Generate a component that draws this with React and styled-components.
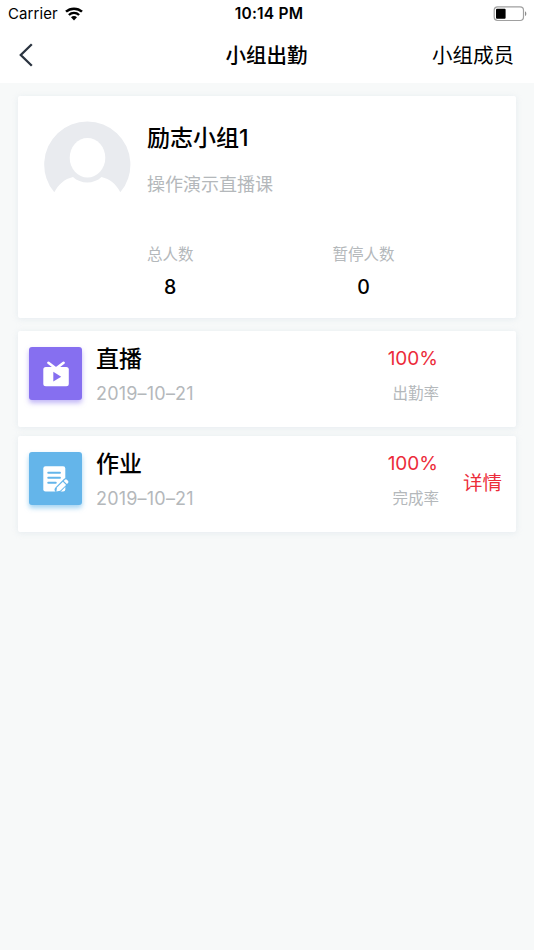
import React from "react";
import styled, { createGlobalStyle } from "styled-components";

const groups = [
  {
    type: "live",
    title: "直播",
    date: "2019–10–21",
    rate: "100%",
    label: "出勤率",
  },
  {
    type: "homework",
    title: "作业",
    date: "2019–10–21",
    rate: "100%",
    label: "完成率",
    action: "详情",
  },
];

const WifiIcon = () => (
  <svg width="18" height="14" viewBox="0 0 18 14" fill="none">
    <path d="M1 4.7C5.5.6 12.5.6 17 4.7" stroke="#000" strokeWidth="2.5" />
    <path d="M3.9 8C6.8 5.2 11.2 5.2 14.1 8" stroke="#000" strokeWidth="2.4" />
    <path d="M6 10.3C7.6 8.7 10.4 8.7 12 10.3L9 13.5Z" fill="#000" />
  </svg>
);

const BatteryIcon = () => (
  <svg width="34" height="16" viewBox="0 0 34 16">
    <rect x="1.2" y="0.9" width="29.3" height="13.6" rx="3.4" fill="none" stroke="#a0a0a0" strokeWidth="1.2" />
    <rect x="3" y="2.7" width="9.6" height="10" rx="1" fill="#000" />
    <path d="M32 5.3C33.8 6 33.8 9.4 32 10.1Z" fill="#8e8e8e" />
  </svg>
);

const BackIcon = () => (
  <svg width="14" height="24" viewBox="0 0 14 24" fill="none">
    <path d="M12.8 1.2L1.8 12L12.8 22.8" stroke="#2b3440" strokeWidth="2.3" />
  </svg>
);

const AvatarIcon = () => (
  <svg width="88" height="72" viewBox="0 0 88 72">
    <path
      d="M11.3 71.3A43.1 43.1 0 1 1 77.3 71.3C73 63 67 58 58.5 56C51 63.3 37.5 63.3 30 56C21.500 58 15.500 63.300 11.300 71.300Z"
      fill="#e9ebef"
    />
    <ellipse cx="44.5" cy="36.7" rx="17.8" ry="19.7" fill="#fff" />
  </svg>
);

const LiveIcon = () => (
  <svg width="53" height="53" viewBox="0 0 53 53">
    <path d="M19.4 15.8L27 21.5L34.6 15.8" stroke="#fff" strokeWidth="2.6" strokeLinecap="round" fill="none" />
    <rect x="14.3" y="19.9" width="25.5" height="19.3" rx="2.5" fill="#fff" />
    <path d="M24.3 24.8V34.6L32.2 29.7Z" fill="#866ff0" />
  </svg>
);

const HomeworkIcon = () => (
  <svg width="53" height="53" viewBox="0 0 53 53">
    <rect x="14.3" y="14.2" width="22" height="25.3" rx="2.2" fill="#fff" />
    <path d="M19.2 20.8H31M19.2 25.8H31M19.2 30.8H26.8" stroke="#64b5ea" strokeWidth="1.9" strokeLinecap="round" />
    <path d="M29 37.6L37.2 29.4" stroke="#64b5ea" strokeWidth="6.6" strokeLinecap="round" />
    <path d="M27.4 39.4L28 35.6L33.9 29.7L37.1 32.9L31.2 38.8Z" fill="#fff" />
    <path d="M34.7 28.9L35.9 27.7Q37 26.9 38.1 27.9L38.9 28.700Q39.9 29.8 39.1 30.900L37.9 32.1Z" fill="#fff" />
  </svg>
);

const StatItem = ({ label, value }) => (
  <Stat>
    <StatLabel>{label}</StatLabel>
    <StatValue>{value}</StatValue>
  </Stat>
);

const GroupRow = ({ item }) => (
  <RowCard>
    <IconBox $live={item.type === "live"}>
      {item.type === "live" ? <LiveIcon /> : <HomeworkIcon />}
    </IconBox>
    <RowInfo>
      <RowTitle>{item.title}</RowTitle>
      <RowDate>{item.date}</RowDate>
    </RowInfo>
    <RowRate>
      <Rate>{item.rate}</Rate>
      <RateLabel>{item.label}</RateLabel>
    </RowRate>
    <RowAction>{item.action}</RowAction>
  </RowCard>
);

const App = () => {
  return (
    <>
      <GlobalStyle />
      <Page>
        <StatusBar>
          <Carrier>
            Carrier
            <WifiIcon />
          </Carrier>
          <Clock>10:14 PM</Clock>
          <BatteryIcon />
        </StatusBar>
        <NavBar>
          <BackButton>
            <BackIcon />
          </BackButton>
          <NavTitle>小组出勤</NavTitle>
          <NavLink>小组成员</NavLink>
        </NavBar>
        <Content>
          <SummaryCard>
            <Profile>
              <AvatarIcon />
              <div>
                <GroupName>励志小组1</GroupName>
                <GroupDesc>操作演示直播课</GroupDesc>
              </div>
            </Profile>
            <Stats>
              <StatItem label="总人数" value="8" />
              <StatItem label="暂停人数" value="0" />
            </Stats>
          </SummaryCard>
          <List>
            {groups.map((item) => (
              <GroupRow item={item} key={item.type} />
            ))}
          </List>
        </Content>
      </Page>
    </>
  );
};

const GlobalStyle = createGlobalStyle`
  * {
    box-sizing: border-box;
  }
  body {
    margin: 0;
    background: #f7f9f9;
    font-family: Inter, "Noto Sans CJK SC", sans-serif;
    color: #000;
  }
  svg {
    display: block;
    flex: none;
  }
`;
const Page = styled.div`
  min-height: 100vh;
  white-space: nowrap;
`;
const StatusBar = styled.div`
  display: grid;
  grid-template-columns: 1fr auto 1fr;
  align-items: center;
  height: 27px;
  padding: 0 7px 0 8px;
  background: #fff;
  font-size: 15px;
  & > svg {
    justify-self: end;
  }
`;
const Carrier = styled.div`
  display: flex;
  align-items: center;
  gap: 7px;
  letter-spacing: 0.1px;
`;
const Clock = styled.div`
  padding-left: 3px;
  font-size: 15.5px;
  font-weight: 600;
  letter-spacing: 0.2px;
`;
const NavBar = styled.div`
  display: grid;
  grid-template-columns: 1fr auto 1fr;
  align-items: center;
  height: 56px;
  padding: 1px 20px 0 19px;
  background: #fff;
  font-size: 20.5px;
  line-height: 31px;
`;
const BackButton = styled.div`
  margin-top: -1px;
  cursor: pointer;
`;
const NavTitle = styled.div`
  font-weight: 500;
`;
const NavLink = styled.div`
  justify-self: end;
`;
const Content = styled.div`
  padding: 12.5px 18px;
`;
const Card = styled.div`
  background: #fff;
  border-radius: 2px;
  box-shadow: 0 1px 6px rgba(190, 205, 220, 0.3);
`;
const SummaryCard = styled(Card)`
  height: 222.5px;
  padding: 25.5px 25px 0;
`;
const Profile = styled.div`
  display: flex;
  gap: 16px;
  height: 120px;
`;
const GroupName = styled.div`
  font-size: 23px;
  font-weight: 500;
  line-height: 34px;
`;
const GroupDesc = styled.div`
  margin-top: 17px;
  font-size: 18px;
  line-height: 26px;
  color: #b4b8bb;
`;
const Stats = styled.div`
  display: flex;
  gap: 139px;
  padding-left: 104px;
`;
const Stat = styled.div`
  text-align: center;
`;
const StatLabel = styled.div`
  font-size: 15.5px;
  line-height: 28px;
  color: #b4b8bb;
`;
const StatValue = styled.div`
  margin-top: 4px;
  font-size: 19.5px;
  font-weight: 450;
  line-height: 28px;
`;
const List = styled.div`
  display: flex;
  flex-direction: column;
  gap: 8.5px;
  margin-top: 13px;
`;
const RowCard = styled(Card)`
  display: flex;
  height: 96px;
  padding: 11px 14px 0 11px;
`;
const IconBox = styled.div`
  display: flex;
  align-items: center;
  justify-content: center;
  flex: none;
  width: 53px;
  height: 53px;
  margin-top: 5px;
  border-radius: 3px;
  background: ${({ $live }) => ($live ? "#866ff0" : "#64b5ea")};
  box-shadow: 0 3px 5px
    ${({ $live }) =>
      $live ? "rgba(134, 111, 240, 0.5)" : "rgba(100, 181, 234, 0.6)"};
`;
const RowInfo = styled.div`
  flex: 1;
  margin-left: 14px;
`;
const RowTitle = styled.div`
  font-size: 23px;
  font-weight: 500;
  line-height: 34px;
`;
const RowDate = styled.div`
  margin-top: 4px;
  font-size: 18px;
  line-height: 28px;
  letter-spacing: 0.2px;
  color: #b4b8bb;
`;
const RowRate = styled.div`
  text-align: right;
`;
const Rate = styled.div`
  padding-right: 1px;
  font-size: 19px;
  line-height: 33px;
  color: #ec2c3a;
`;
const RateLabel = styled.div`
  margin-top: 5px;
  font-size: 15.5px;
  line-height: 28px;
  color: #b4b8bb;
`;
const RowAction = styled.div`
  width: 63px;
  padding-top: 22px;
  text-align: right;
  font-size: 19.5px;
  line-height: 28px;
  color: #ec2c3a;
`;

export default App;
